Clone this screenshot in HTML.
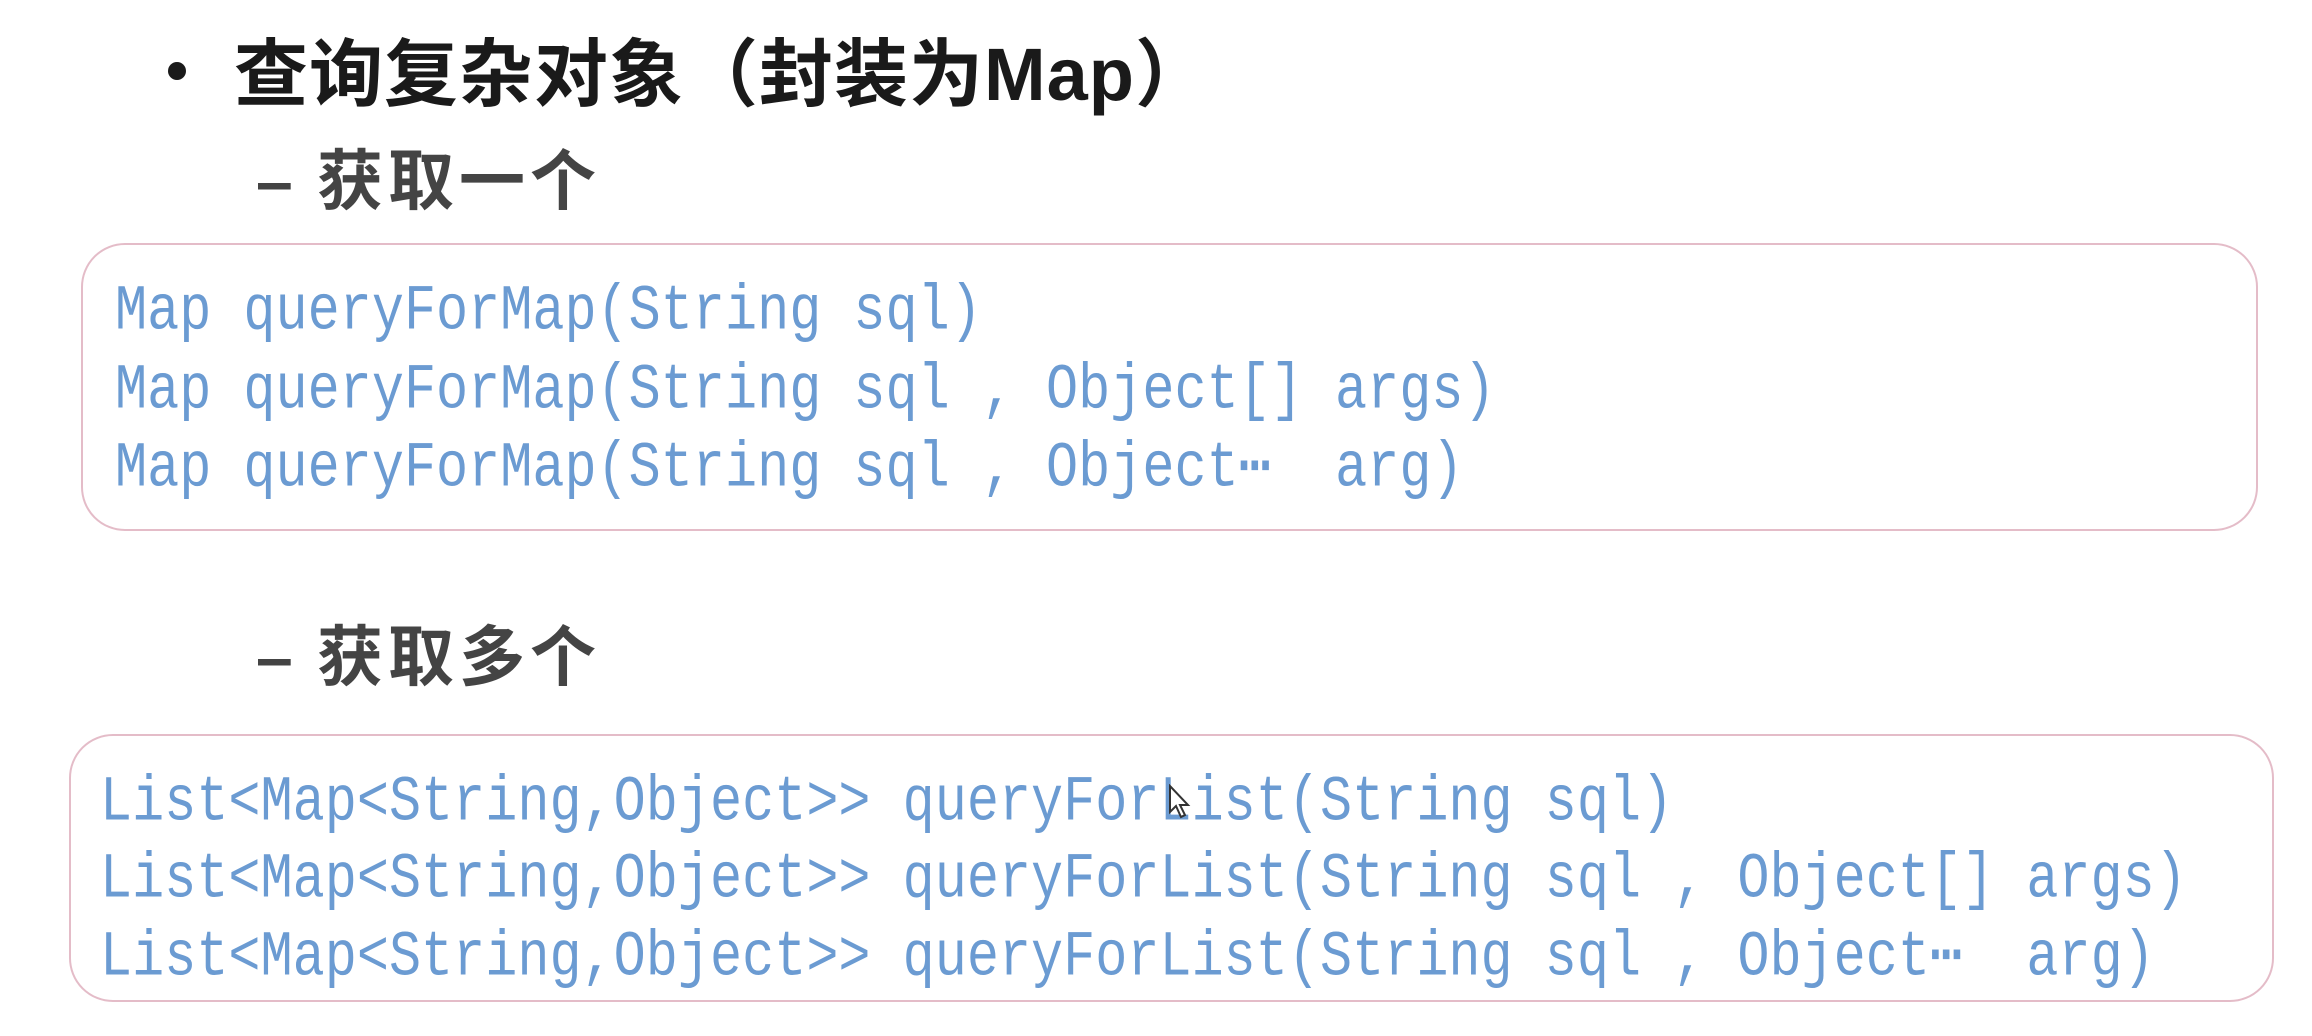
<!DOCTYPE html>
<html><head><meta charset="utf-8"><style>
html,body{margin:0;padding:0;background:#fff;width:2312px;height:1036px;overflow:hidden;position:relative}
.a{position:absolute;white-space:pre}
.t{font-family:"Liberation Sans","Noto Sans CJK SC",sans-serif;font-weight:bold;color:#1a1a1a}
.s{font-family:"Liberation Sans","Noto Sans CJK SC",sans-serif;font-weight:bold;color:#444}
.box{position:absolute;border:2px solid #e4bcc8;border-radius:44px;box-sizing:border-box}
.c{position:absolute;font-family:"Liberation Mono",monospace;font-size:53.5px;color:#6b9bd2;white-space:pre;height:78px;line-height:78px;transform:scaleY(1.2);transform-origin:left center}
</style></head><body>
<div class="a" style="left:168px;top:62px;width:18px;height:18px;border-radius:50%;background:#1a1a1a"></div>
<div class="a t" style="left:234px;top:28px;font-size:74px;line-height:94px;letter-spacing:1px">查询复杂对象（封装为Map）</div>
<div class="a s" style="left:256px;top:143px;font-size:66px;line-height:76px">–</div>
<div class="a s" style="left:317px;top:143px;font-size:66px;line-height:76px;letter-spacing:5px">获取一个</div>
<div class="box" style="left:81px;top:243px;width:2177px;height:288px"></div>
<div class="c" style="left:115px;top:274px">Map queryForMap(String sql)</div>
<div class="c" style="left:115px;top:353px">Map queryForMap(String sql , Object[] args)</div>
<div class="c" style="left:115px;top:431px">Map queryForMap(String sql , Object⋯  arg)</div>
<div class="a s" style="left:256px;top:619px;font-size:66px;line-height:76px">–</div>
<div class="a s" style="left:317px;top:619px;font-size:66px;line-height:76px;letter-spacing:5px">获取多个</div>
<div class="box" style="left:69px;top:734px;width:2205px;height:268px"></div>
<div class="c" style="left:100px;top:765px">List&lt;Map&lt;String,Object&gt;&gt; queryForList(String sql)</div>
<div class="c" style="left:100px;top:842px">List&lt;Map&lt;String,Object&gt;&gt; queryForList(String sql , Object[] args)</div>
<div class="c" style="left:100px;top:920px">List&lt;Map&lt;String,Object&gt;&gt; queryForList(String sql , Object⋯  arg)</div>
<svg class="a" style="left:1168px;top:784px" width="24" height="36" viewBox="0 0 24 36"><path d="M2 2 L2 28 L8 22 L13 33 L17 31 L12 21 L20 21 Z" fill="#fff" stroke="#333" stroke-width="2"/></svg>
</body></html>
